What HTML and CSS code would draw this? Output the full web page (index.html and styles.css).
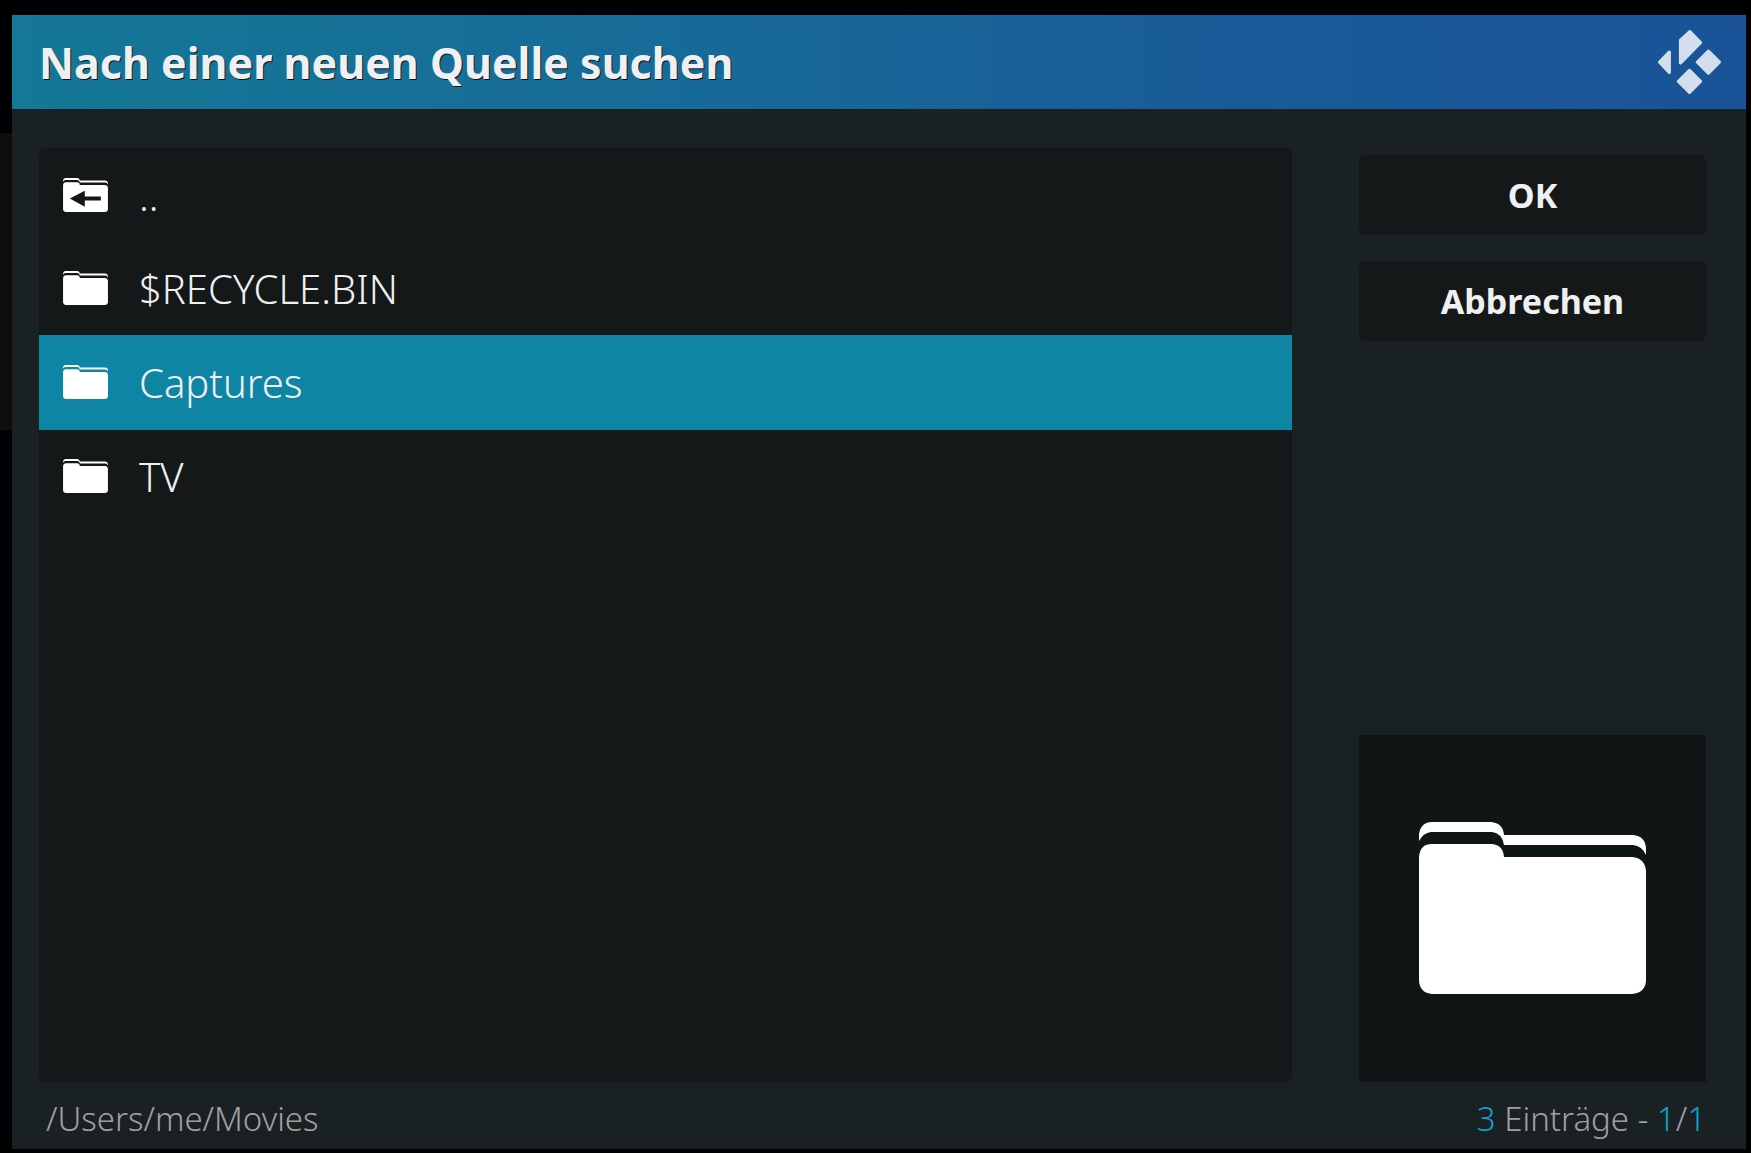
FILE: index.html
```html
<!DOCTYPE html>
<html lang="de">
<head>
    <meta charset="UTF-8">
    <meta name="viewport" content="width=device-width, initial-scale=1.0">
    <title>Nach einer neuen Quelle suchen</title>
    <link rel="stylesheet" href="styles.css">
</head>
<body>
    <!-- shared folder shapes -->
    <svg class="symbols" aria-hidden="true">
        <symbol id="folder" viewBox="0 0 227 172">
            <path d="M0 19V12Q2 0 13 0H72Q84 1 85 13H214Q226 14 227 26V33Q223 24 214 23H85Q83 11 73 10H12Q4 11 0 19Z"/>
            <path d="M0 35Q1 22 13 22H73Q84 23 85 35H213Q226 36 227 49V159Q226 171 213 172H13Q1 171 0 159Z"/>
        </symbol>
        <symbol id="folder-back" viewBox="0 0 227 172">
            <path d="M0 19V12Q2 0 13 0H72Q84 1 85 13H214Q226 14 227 26V33Q223 24 214 23H85Q83 11 73 10H12Q4 11 0 19Z"/>
            <path fill-rule="evenodd" d="M0 35Q1 22 13 22H73Q84 23 85 35H213Q226 36 227 49V159Q226 171 213 172H13Q1 171 0 159ZM34 104L110 64V94H191V114H110V145Z"/>
        </symbol>
    </svg>

    <div class="dialog">
        <header class="dialog-header">
            <h1>Nach einer neuen Quelle suchen</h1>
            <svg class="logo" viewBox="0 0 190 193" aria-hidden="true">
                <path d="M96 5L128 38L68 99V31Z"/>
                <path d="M5 97L34 67V128Z"/>
                <path d="M152 64L185 97L152 130L119 97Z"/>
                <path d="M95 122L128 155L95 188L62 155Z"/>
            </svg>
        </header>

        <main class="dialog-body">
            <ul class="file-list">
                <li><a href="#"><svg class="icon"><use href="#folder-back"/></svg>..</a></li>
                <li><a href="#"><svg class="icon"><use href="#folder"/></svg>$RECYCLE.BIN</a></li>
                <li><a href="#" class="selected"><svg class="icon"><use href="#folder"/></svg>Captures</a></li>
                <li><a href="#"><svg class="icon"><use href="#folder"/></svg>TV</a></li>
            </ul>

            <div class="side">
                <button type="button">OK</button>
                <button type="button">Abbrechen</button>
                <div class="thumb">
                    <svg><use href="#folder"/></svg>
                </div>
            </div>
        </main>

        <footer class="dialog-footer">
            <span>/Users/me/Movies</span>
            <span><b>3</b> Einträge - <b>1</b>/<b>1</b></span>
        </footer>
    </div>
</body>
</html>
```
FILE: styles.css
```css
* {
    box-sizing: border-box;
}

body {
    display: flex;
    min-height: 100vh;
    margin: 0;
    padding: 15px 5px 4px 12px;
    /* menu strip showing behind the dialog */
    background: linear-gradient(#0f0e0f, #0f0e0f) 0 133px / 12px 297px no-repeat #000102;
    color: #f0f0f0;
    font-family: "Noto Sans", "Open Sans", sans-serif;
    font-weight: 300;
}

.symbols {
    position: absolute;
    width: 0;
    height: 0;
}

.dialog {
    display: flex;
    flex: 1;
    flex-direction: column;
    background-color: #1a2123;
}

.dialog-header {
    display: flex;
    align-items: center;
    justify-content: space-between;
    height: 94px;
    padding: 0 25px 0 27px;
    background: linear-gradient(to right, #147896, #176a98 40%, #195b98 70%, #1a5398);
}

h1 {
    margin: 0;
    padding-top: 1px;
    font-size: 43px;
    font-weight: 700;
    line-height: 60px;
    text-shadow: 1px 1px 0 #101010;
}

.logo {
    width: 63px;
    height: 64px;
    fill: #d2deeb;
    stroke: #d2deeb;
    stroke-width: 10;
    stroke-linejoin: round;
}

.dialog-body {
    display: grid;
    flex: 1;
    grid-template-columns: 1fr 347px;
    gap: 67px;
    padding: 39px 40px 0 27px;
}

.file-list {
    margin: 0;
    padding: 1px 0;
    background-color: #141819;
    border-radius: 6px;
    list-style: none;
}

.file-list a {
    display: flex;
    align-items: center;
    gap: 31px;
    height: 93px;
    padding: 0 24px;
    color: #f0f0f0;
    font-size: 40px;
    text-decoration: none;
}

.file-list a.selected {
    height: 95px;
    background-color: #0f85a5;
}

.icon {
    width: 45px;
    height: 34px;
    margin-bottom: 2px;
    fill: #fff;
}

.side {
    display: flex;
    flex-direction: column;
    gap: 26px;
    padding-top: 7px;
}

button {
    height: 80px;
    border: none;
    border-radius: 6px;
    background-color: #141819;
    color: #f0f0f0;
    font-family: inherit;
    font-size: 34px;
    font-weight: 700;
    cursor: pointer;
}

.thumb {
    display: flex;
    align-items: center;
    justify-content: center;
    height: 347px;
    margin-top: auto;
    padding-bottom: 2px;
    background-color: #101616;
}

.thumb svg {
    width: 227px;
    height: 172px;
    fill: #fff;
}

.dialog-footer {
    display: flex;
    align-items: center;
    justify-content: space-between;
    height: 67px;
    padding: 6px 40px 0 34px;
    color: #a0a0a0;
    font-size: 33px;
}

.dialog-footer b {
    color: #12a0c8;
    font-weight: 300;
}
```
